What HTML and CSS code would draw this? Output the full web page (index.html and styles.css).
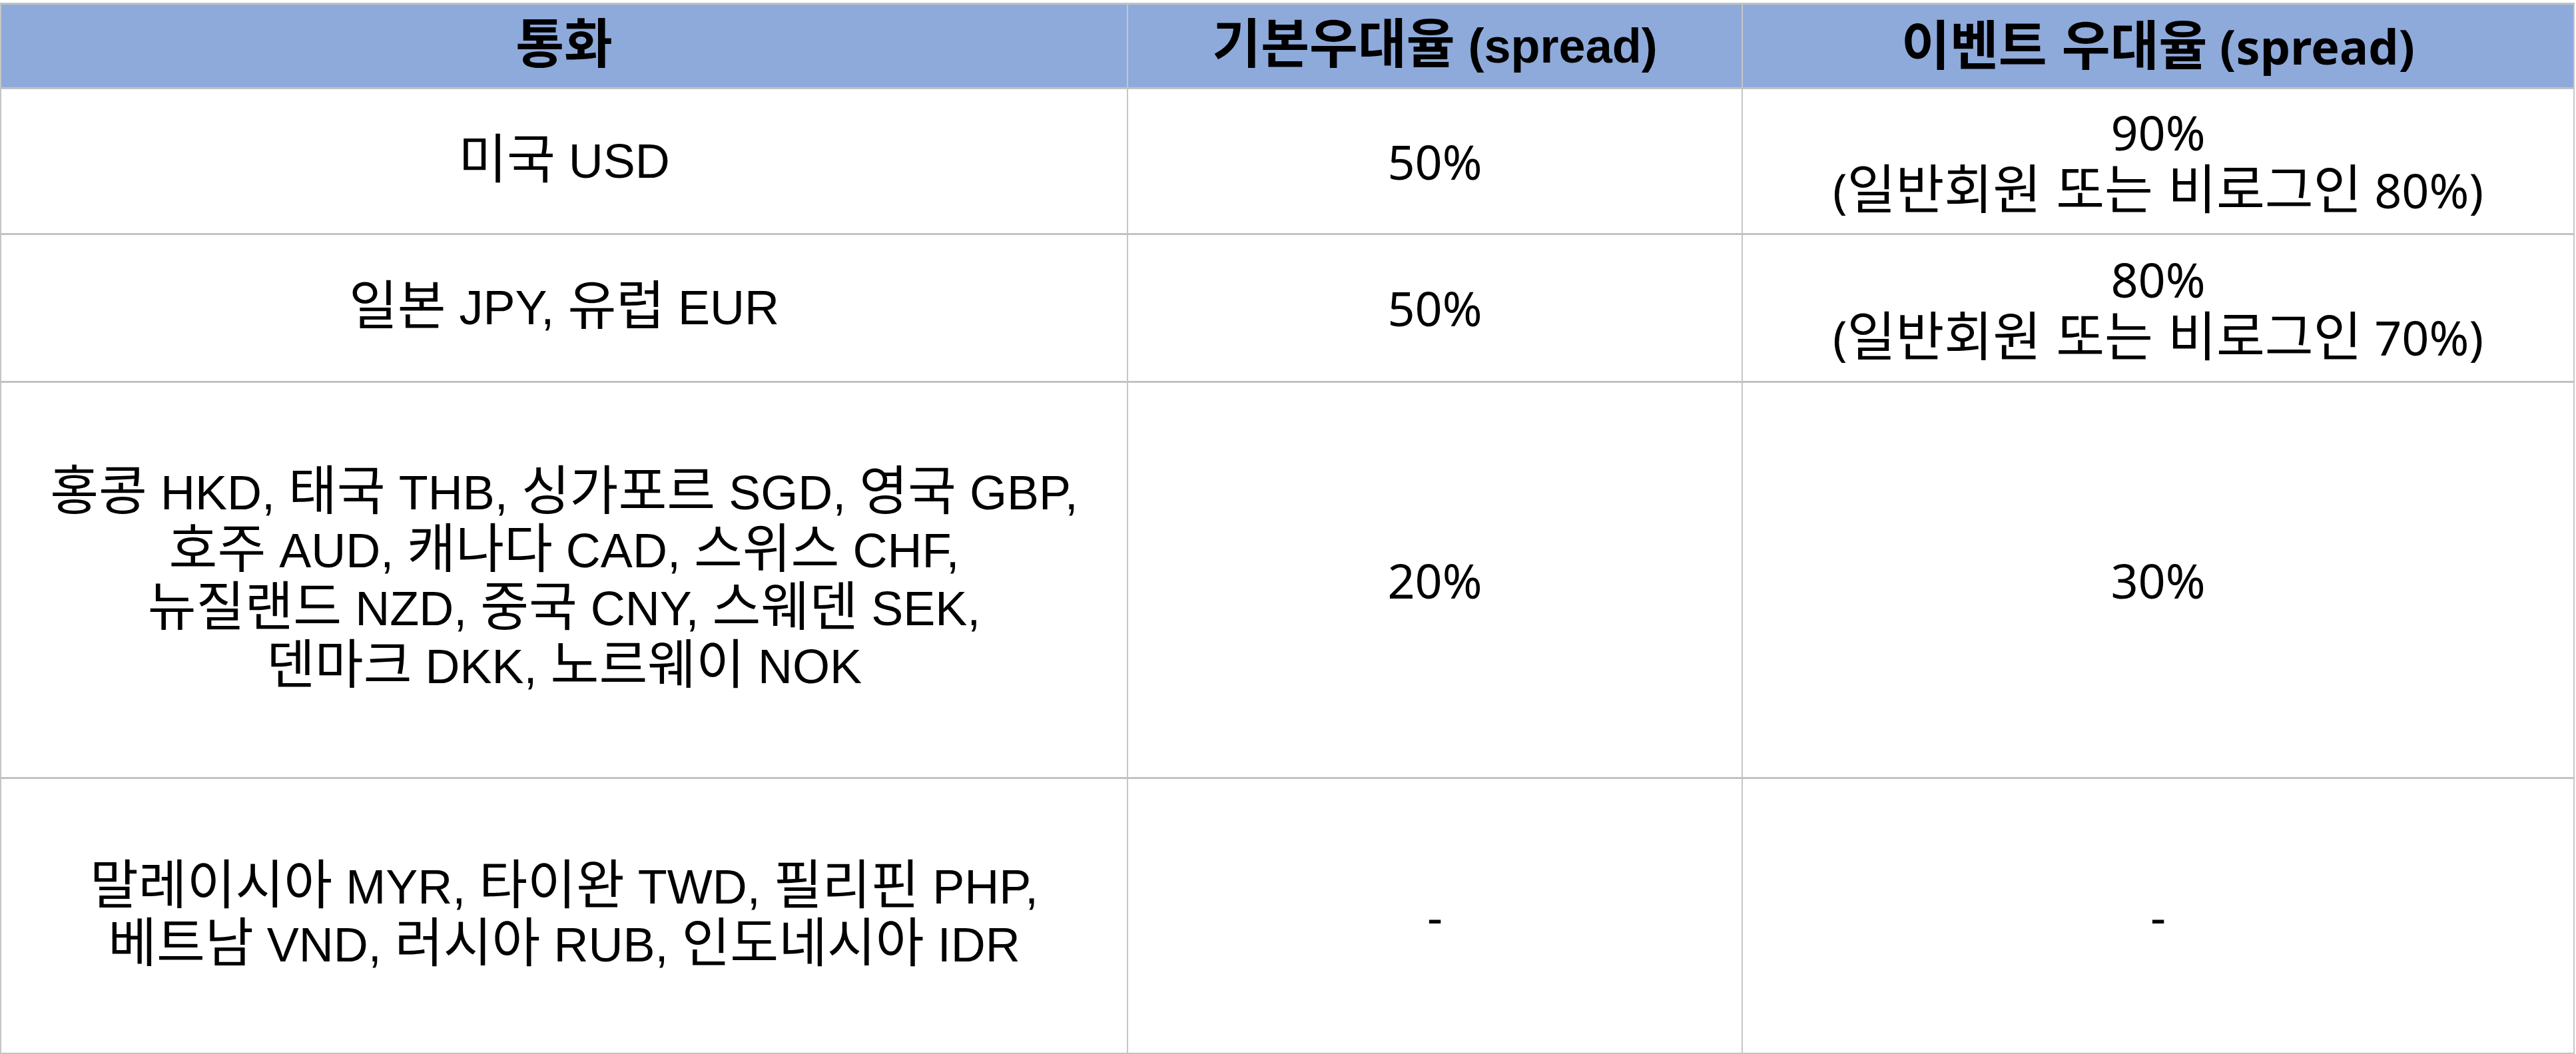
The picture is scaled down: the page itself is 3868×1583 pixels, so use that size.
FILE: index.html
```html
<!DOCTYPE html>
<html lang="ko">
<head>
<meta charset="utf-8">
<title>환율 우대율</title>
<link rel="stylesheet" href="styles.css">
</head>
<body>
<table class="rates">
  <colgroup>
    <col class="col-currency">
    <col class="col-base">
    <col class="col-event">
  </colgroup>
  <thead>
    <tr class="row-head">
      <th class="head-arial"><span class="ko">통화</span></th>
      <th class="head-arial"><span class="ko">기본우대율</span> (spread)</th>
      <th class="head-gothic"><span class="ko">이벤트 우대율</span> (spread)</th>
    </tr>
  </thead>
  <tbody>
    <tr class="row-1">
      <td class="cur"><span class="ko">미국</span> USD</td>
      <td class="val">50%</td>
      <td class="val">90%<br>(<span class="ko">일반회원 또는 비로그인</span> 80%)</td>
    </tr>
    <tr class="row-2">
      <td class="cur"><span class="ko">일본</span> JPY, <span class="ko">유럽</span> EUR</td>
      <td class="val">50%</td>
      <td class="val">80%<br>(<span class="ko">일반회원 또는 비로그인</span> 70%)</td>
    </tr>
    <tr class="row-3">
      <td class="cur"><span class="ko">홍콩</span> HKD, <span class="ko">태국</span> THB, <span class="ko">싱가포르</span> SGD, <span class="ko">영국</span> GBP,<br><span class="ko">호주</span> AUD, <span class="ko">캐나다</span> CAD, <span class="ko">스위스</span> CHF,<br><span class="ko">뉴질랜드</span> NZD, <span class="ko">중국</span> CNY, <span class="ko">스웨덴</span> SEK,<br><span class="ko">덴마크</span> DKK, <span class="ko">노르웨이</span> NOK</td>
      <td class="val">20%</td>
      <td class="val">30%</td>
    </tr>
    <tr class="row-4">
      <td class="cur"><span class="ko">말레이시아</span> MYR, <span class="ko">타이완</span> TWD, <span class="ko">필리핀</span> PHP,<br><span class="ko">베트남</span> VND, <span class="ko">러시아</span> RUB, <span class="ko">인도네시아</span> IDR</td>
      <td class="val">-</td>
      <td class="val">-</td>
    </tr>
  </tbody>
</table>
</body>
</html>
```

FILE: styles.css
```css
html, body {
  margin: 0;
  padding: 0;
  background: #ffffff;
}

body {
  padding-top: 4px;
}

.rates {
  width: 3864px;
  table-layout: fixed;
  border-collapse: collapse;
  color: #000000;
}

.col-currency { width: 1692px; }
.col-base { width: 923px; }
.col-event { width: 1249px; }

.rates th,
.rates td {
  padding: 0;
  text-align: center;
  vertical-align: middle;
  white-space: nowrap;
  border-left: 2px solid #c6c6c6;
  border-right: 2px solid #c6c6c6;
  border-top: 3px solid #c2c2c2;
  border-bottom: 3px solid #c2c2c2;
  font-size: 72px;
  line-height: 87px;
}

.row-head th {
  background: #8eaadb;
  font-weight: 700;
}

.head-arial {
  font-family: "Liberation Sans", "Noto Sans CJK KR", sans-serif;
}

.head-gothic {
  font-family: "Noto Sans", "Noto Sans CJK KR", sans-serif;
}

.cur {
  font-family: "Liberation Sans", "Noto Sans CJK KR", sans-serif;
  font-weight: 400;
}

.val {
  font-family: "Noto Sans", "Noto Sans CJK KR", sans-serif;
  font-weight: 400;
}

.ko {
  font-family: "Noto Sans CJK KR", sans-serif;
  font-size: 1.1em;
  line-height: 0.8;
  vertical-align: baseline;
}

.row-head { height: 127px; }
.row-1 { height: 219px; }
.row-2 { height: 222px; }
.row-3 { height: 595px; }
.row-4 { height: 414px; }
```
